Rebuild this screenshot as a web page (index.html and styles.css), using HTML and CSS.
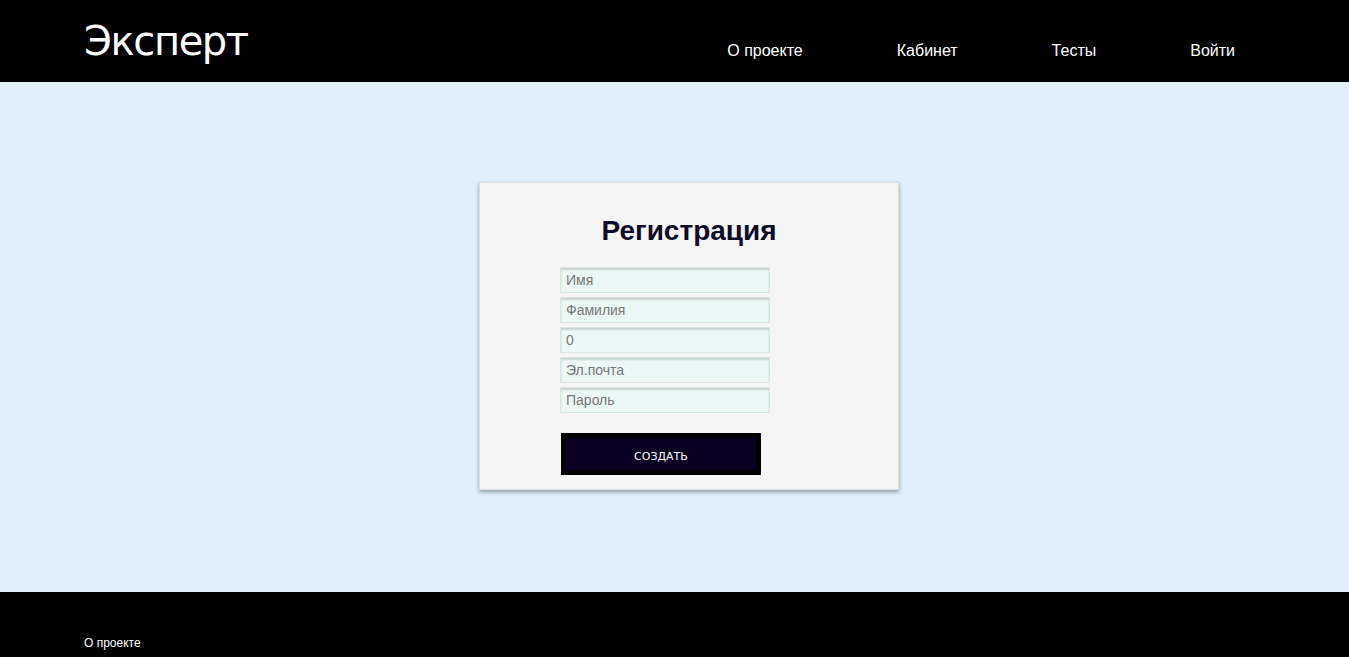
FILE: index.html
```html
<!DOCTYPE html>
<html lang="ru">
<head>
<meta charset="utf-8">
<title>Эксперт</title>
<link rel="stylesheet" href="styles.css">
</head>
<body>
<header class="header">
  <div class="logo">Эксперт</div>
  <nav class="nav">
    <a href="#">О проекте</a>
    <a href="#">Кабинет</a>
    <a href="#">Тесты</a>
    <a href="#">Войти</a>
  </nav>
</header>
<main class="main">
  <div class="card">
    <h2 class="title">Регистрация</h2>
    <form class="form">
      <input class="field" type="text" placeholder="Имя">
      <input class="field" type="text" placeholder="Фамилия">
      <input class="field" type="text" placeholder="0">
      <input class="field" type="text" placeholder="Эл.почта">
      <input class="field" type="password" placeholder="Пароль">
      <button class="btn" type="button">СОЗДАТЬ</button>
    </form>
  </div>
</main>
<footer class="footer">
  <a href="#">О проекте</a>
</footer>
</body>
</html>
```
FILE: styles.css
```css
html, body { margin: 0; padding: 0; }
body { font-family: "Liberation Sans", Arial, sans-serif; background: #000; }
a { color: #fff; text-decoration: none; }

.header {
  height: 82px;
  background: #000;
  display: flex;
  align-items: center;
  padding-left: 84px;
  padding-right: 114px;
}
.logo {
  font-family: "DejaVu Sans", Verdana, sans-serif;
  color: #fff;
  font-size: 40px;
  line-height: 44px;
  margin-top: 0;
  letter-spacing: -1.4px;
}
.nav {
  margin-left: auto;
  display: flex;
  gap: 94px;
  font-size: 16px;
  margin-top: 20px;
}

.main {
  background: #e0effa;
  height: 510px;
  padding-top: 100px;
  padding-left: 29px;
  box-sizing: border-box;
  display: flex;
  justify-content: center;
  align-items: flex-start;
}
.card {
  width: 420px;
  box-sizing: border-box;
  background: #f5f5f5;
  border: 1px solid #d6dde3;
  box-shadow: 0 2px 4px rgba(0,0,0,0.35);
  padding: 32px 0 14px 80px;
}
.title {
  margin: 0 0 20px;
  font-size: 28px;
  line-height: 32px;
  font-weight: bold;
  color: #0d0b28;
  text-align: center;
  padding-right: 80px;
}
.form {
  display: flex;
  flex-direction: column;
  align-items: flex-start;
  gap: 4px;
}
.field {
  width: 210px;
  height: 26px;
  box-sizing: border-box;
  border: 1px solid #d8e6e2;
  background: #ebf8f6;
  box-shadow: inset 0 2px 2px rgba(0,0,0,0.15);
  padding: 0 5px;
  font-family: "Liberation Sans", Arial, sans-serif;
  font-size: 14px;
  color: #666;
  outline: none;
}
.field::placeholder { color: #777; }
.btn {
  margin-top: 16px;
  margin-left: 1px;
  width: 200px;
  height: 42px;
  box-sizing: border-box;
  border: 5px solid #000;
  background: #0a0024;
  color: #fff;
  font-family: "DejaVu Sans", Verdana, sans-serif;
  font-size: 11px;
  padding: 4px 0 0;
}

.footer {
  height: 65px;
  box-sizing: border-box;
  background: #000;
  padding: 44px 0 0 84px;
  font-size: 12px;
}
```
